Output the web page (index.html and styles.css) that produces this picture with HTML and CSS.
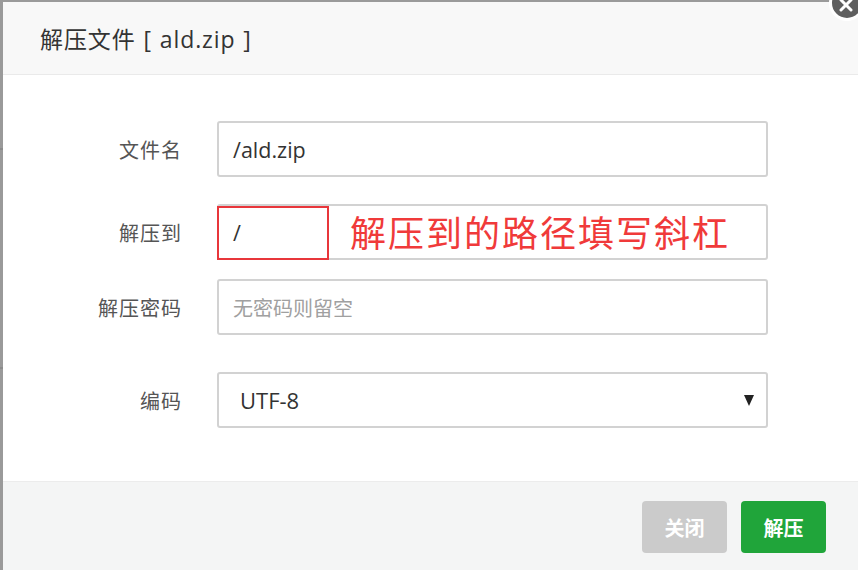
FILE: index.html
```html
<!DOCTYPE html>
<html lang="zh">
<head>
<meta charset="utf-8">
<title>解压文件</title>
<link rel="stylesheet" href="styles.css">
</head>
<body>
<div class="screen">
<div class="dialog">
  <div class="header">解压文件 [ ald.zip ]</div>
  <span class="close-btn" aria-label="关闭">
    <svg width="14" height="14" viewBox="0 0 14 14"><path d="M2 2 L12 12 M12 2 L2 12" stroke="#fff" stroke-width="3" stroke-linecap="round"/></svg>
  </span>
  <div class="body">
    <div class="row row1">
      <label class="label">文件名</label>
      <div class="field">/ald.zip</div>
    </div>
    <div class="row row2">
      <label class="label">解压到</label>
      <div class="field field-path">
        <span class="path-val">/</span>
        <span class="mark"></span>
        <span class="note">解压到的路径填写斜杠</span>
      </div>
    </div>
    <div class="row row3">
      <label class="label">解压密码</label>
      <div class="field placeholder">无密码则留空</div>
    </div>
    <div class="row row4">
      <label class="label">编码</label>
      <div class="field select"><span class="sel-val">UTF-8</span><span class="caret"></span></div>
    </div>
  </div>
  <div class="footer">
    <button class="btn btn-close">关闭</button>
    <button class="btn btn-ok">解压</button>
  </div>
</div>
</div>
</body>
</html>
```
FILE: styles.css
```css
html, body {
  margin: 0;
  padding: 0;
}
.screen {
  width: 858px;
  height: 570px;
  overflow: hidden;
  background: #9a9a9a repeating-linear-gradient(to bottom, transparent 0, transparent 148px, #8c8c8c 148px, #8c8c8c 150px, transparent 150px, transparent 219px);
  font-family: "Open Sans", "Noto Sans CJK SC", sans-serif;
  padding: 2px 0 0 3px;
  box-sizing: border-box;
}
.dialog {
  position: relative;
  width: 855px;
  height: 568px;
  background: #fff;
  display: flex;
  flex-direction: column;
}
.header {
  height: 72px;
  flex: none;
  background: #f8f8f8;
  border-bottom: 1px solid #eaeaea;
  padding-left: 37px;
  display: flex;
  align-items: center;
  font-size: 23px;
  letter-spacing: 0.9px;
  word-spacing: 1px;
  color: #333;
}
.close-btn {
  position: absolute;
  left: 826px;
  top: -17px;
  width: 36px;
  height: 36px;
  border-radius: 50%;
  background: #5f5f5f;
  border: 3px solid #fff;
  display: flex;
  align-items: flex-end;
  justify-content: flex-start;
  padding: 0 0 6px 7px;
  box-sizing: border-box;
}
.body {
  height: 406px;
  flex: none;
  padding-top: 46px;
  box-sizing: border-box;
}
.row {
  display: flex;
  align-items: center;
}
.row2 { margin-top: 27px; }
.row3 { margin-top: 19px; }
.row4 { margin-top: 37px; }
.label {
  width: 214px;
  text-align: right;
  font-size: 20px;
  letter-spacing: 1px;
  color: #555;
  padding-right: 35px;
  box-sizing: border-box;
  font-family: "Noto Sans CJK SC", sans-serif;
}
.field {
  width: 551px;
  height: 56px;
  border: 2px solid #d2d2d2;
  border-radius: 3px;
  box-sizing: border-box;
  display: flex;
  align-items: center;
  padding-left: 14px;
  font-size: 21.5px;
  color: #333;
}
.placeholder {
  color: #a0a0a0;
  font-size: 20px;
  font-family: "Noto Sans CJK SC", sans-serif;
}
.field-path {
  position: relative;
  padding-left: 0;
}
.path-val {
  width: 112px;
  padding-left: 14px;
  box-sizing: border-box;
}
.mark {
  position: absolute;
  left: -2px;
  top: 0px;
  width: 112px;
  height: 54px;
  border: 2px solid #e8363b;
  box-sizing: border-box;
}
.note {
  margin-left: 19px;
  font-size: 36px;
  color: #f03a3a;
  font-family: "Noto Sans CJK SC", sans-serif;
  line-height: 1;
  letter-spacing: 2px;
  margin-top: -3px;
}
.select {
  padding-left: 21px;
  justify-content: space-between;
  padding-right: 12px;
  font-size: 22px;
}
.caret {
  width: 0;
  height: 0;
  border-left: 5px solid transparent;
  border-right: 5px solid transparent;
  border-top: 11px solid #222;
}
.footer {
  flex: 1;
  background: #f4f5f5;
  border-top: 1px solid #ececec;
  display: flex;
  align-items: flex-start;
  padding: 19px 0 0 639px;
  gap: 14px;
}
.btn {
  width: 85px;
  height: 52px;
  border: none;
  border-radius: 4px;
  color: #fff;
  font-size: 20px;
  font-weight: bold;
  font-family: "Noto Sans CJK SC", sans-serif;
  padding: 0;
}
.btn-close { background: #cbcbcb; }
.btn-ok { background: #20a53a; }
```
